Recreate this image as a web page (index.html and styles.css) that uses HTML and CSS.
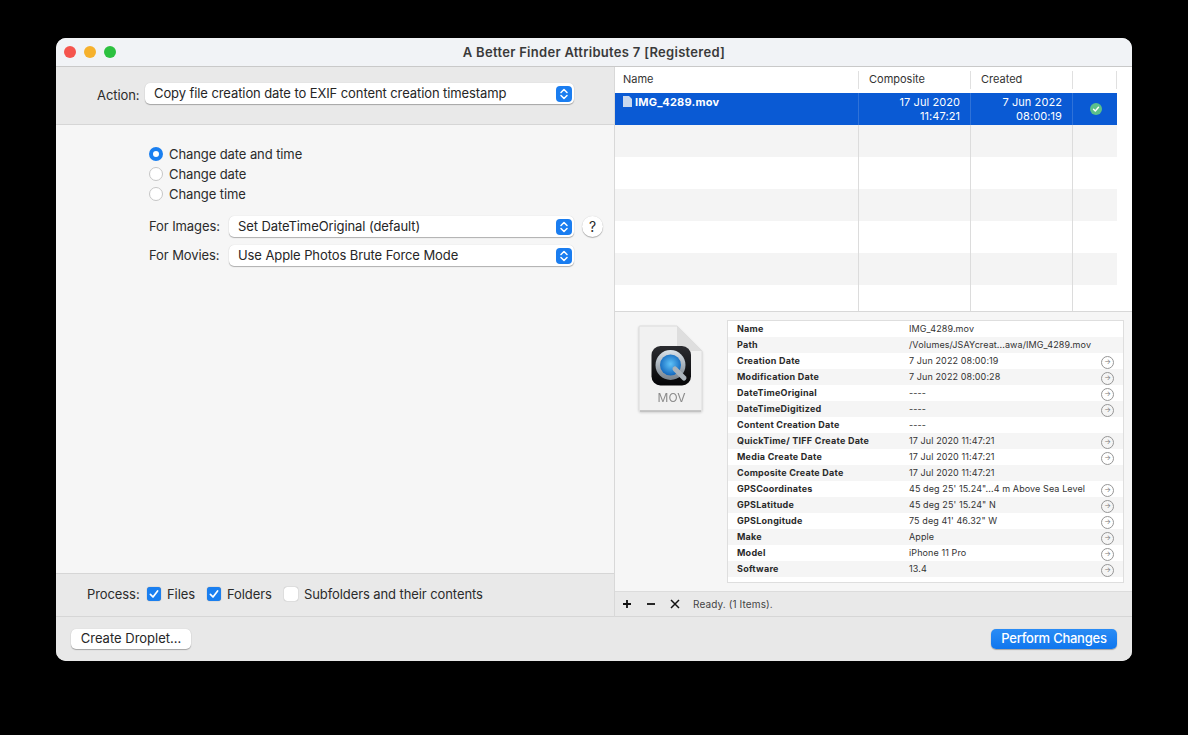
FILE: index.html
```html
<!DOCTYPE html>
<html lang="en">
<head>
<meta charset="utf-8">
<title>A Better Finder Attributes 7</title>
<link rel="stylesheet" href="styles.css">
</head>
<body>
<div class="window">
  <header class="titlebar">
    <div class="lights"><span class="light red"></span><span class="light yellow"></span><span class="light green"></span></div>
    <div class="title">A Better Finder Attributes 7 [Registered]</div>
  </header>
  <div class="content">
    <section class="left">
      <div class="action-bar">
        <span class="action-label">Action:</span>
        <div class="popup action-popup"><span class="popup-text">Copy file creation date to EXIF content creation timestamp</span><span class="stepper"><svg width="16" height="16" viewBox="0 0 16 16"><path d="M5 6.5 8 3.5l3 3M5 9.5l3 3 3-3" fill="none" stroke="#fff" stroke-width="1.5" stroke-linecap="round" stroke-linejoin="round"/></svg></span></div>
      </div>
      <div class="options">
        <div class="radios">
          <label class="radio-row"><span class="radio on"></span>Change date and time</label>
          <label class="radio-row"><span class="radio"></span>Change date</label>
          <label class="radio-row"><span class="radio"></span>Change time</label>
        </div>
        <div class="form-row">
          <span class="form-label">For Images:</span>
          <div class="popup form-popup"><span class="popup-text">Set DateTimeOriginal (default)</span><span class="stepper"><svg width="16" height="16" viewBox="0 0 16 16"><path d="M5 6.5 8 3.5l3 3M5 9.5l3 3 3-3" fill="none" stroke="#fff" stroke-width="1.5" stroke-linecap="round" stroke-linejoin="round"/></svg></span></div>
          <span class="help">?</span>
        </div>
        <div class="form-row">
          <span class="form-label">For Movies:</span>
          <div class="popup form-popup"><span class="popup-text">Use Apple Photos Brute Force Mode</span><span class="stepper"><svg width="16" height="16" viewBox="0 0 16 16"><path d="M5 6.5 8 3.5l3 3M5 9.5l3 3 3-3" fill="none" stroke="#fff" stroke-width="1.5" stroke-linecap="round" stroke-linejoin="round"/></svg></span></div>
        </div>
      </div>
      <div class="process-bar">
        <span class="process-label">Process:</span>
        <span class="check on"><svg width="14" height="14" viewBox="0 0 14 14"><path d="M3.4 7.4 6 10l4.6-6" fill="none" stroke="#fff" stroke-width="1.7" stroke-linecap="round" stroke-linejoin="round"/></svg></span><span class="check-text files">Files</span>
        <span class="check on"><svg width="14" height="14" viewBox="0 0 14 14"><path d="M3.4 7.4 6 10l4.6-6" fill="none" stroke="#fff" stroke-width="1.7" stroke-linecap="round" stroke-linejoin="round"/></svg></span><span class="check-text folders">Folders</span>
        <span class="check"></span><span class="check-text">Subfolders and their contents</span>
      </div>
    </section>
    <section class="right">
      <div class="file-table">
        <div class="t-row t-head"><div class="cell">Name</div><div class="cell">Composite</div><div class="cell">Created</div><div class="cell"></div></div>
        <div class="t-row selected">
          <div class="cell name"><svg class="mini-doc" width="9" height="11" viewBox="0 0 9 11"><path d="M0 0h6l3 3v8H0z" fill="#c9d8ee"/></svg>IMG_4289.mov</div>
          <div class="cell date">17 Jul 2020<br>11:47:21</div>
          <div class="cell date">7 Jun 2022<br>08:00:19</div>
          <div class="cell status"><svg width="12" height="12" viewBox="0 0 12 12"><circle cx="6" cy="6" r="6" fill="#5cc08a"/><path d="M3.5 6.2 5.300 8l3.200-3.800" fill="none" stroke="#fff" stroke-width="1.4" stroke-linecap="round" stroke-linejoin="round"/></svg></div>
        </div>
        <div class="t-row alt"><div class="cell"></div><div class="cell"></div><div class="cell"></div><div class="cell"></div></div>
        <div class="t-row"><div class="cell"></div><div class="cell"></div><div class="cell"></div><div class="cell"></div></div>
        <div class="t-row alt"><div class="cell"></div><div class="cell"></div><div class="cell"></div><div class="cell"></div></div>
        <div class="t-row"><div class="cell"></div><div class="cell"></div><div class="cell"></div><div class="cell"></div></div>
        <div class="t-row alt"><div class="cell"></div><div class="cell"></div><div class="cell"></div><div class="cell"></div></div>
        <div class="t-row short"><div class="cell"></div><div class="cell"></div><div class="cell"></div><div class="cell"></div></div>
      </div>
      <div class="detail">
        <svg class="file-icon" width="66" height="90" viewBox="0 0 66 90">
          <defs>
            <radialGradient id="lens" cx="50%" cy="45%" r="60%"><stop offset="0" stop-color="#5fc2f8"/><stop offset="1" stop-color="#0c5fb8"/></radialGradient>
            <linearGradient id="ring" x1="0" y1="0" x2="0" y2="1"><stop offset="0" stop-color="#dbe3ea"/><stop offset="1" stop-color="#76818c"/></linearGradient>
            <linearGradient id="tile" x1="0" y1="0" x2="0" y2="1"><stop offset="0" stop-color="#2b2c30"/><stop offset="1" stop-color="#050507"/></linearGradient>
          </defs>
          <path d="M2 1h37l25 25v59a1 1 0 0 1-1 1H2a1 1 0 0 1-1-1V2a1 1 0 0 1 1-1z" fill="#f1f1f1" stroke="#dcdcdc"/>
          <path d="M2 86h61" stroke="#bdbdbd" stroke-width="1.5"/>
          <path d="M39 1l25 25H43a4 4 0 0 1-4-4z" fill="#dedede"/>
          <rect x="13.500" y="21" width="39.500" height="39.500" rx="9" fill="url(#tile)"/>
          <circle cx="32.500" cy="40" r="15" fill="url(#ring)"/>
          <circle cx="32.500" cy="40" r="10.500" fill="url(#lens)"/>
          <path d="M37 44l9 9" stroke="#aab3bb" stroke-width="5" stroke-linecap="round"/>
          <text x="33.500" y="77" text-anchor="middle" class="mov-text">MOV</text>
        </svg>
        <div class="info">
          <div class="i-row"><b>Name</b><span>IMG_4289.mov</span></div>
          <div class="i-row"><b>Path</b><span>/Volumes/JSAYcreat...awa/IMG_4289.mov</span></div>
          <div class="i-row go"><b>Creation Date</b><span>7 Jun 2022 08:00:19</span></div>
          <div class="i-row go"><b>Modification Date</b><span>7 Jun 2022 08:00:28</span></div>
          <div class="i-row go"><b>DateTimeOriginal</b><span>----</span></div>
          <div class="i-row go"><b>DateTimeDigitized</b><span>----</span></div>
          <div class="i-row"><b>Content Creation Date</b><span>----</span></div>
          <div class="i-row go"><b>QuickTime/ TIFF Create Date</b><span>17 Jul 2020 11:47:21</span></div>
          <div class="i-row go"><b>Media Create Date</b><span>17 Jul 2020 11:47:21</span></div>
          <div class="i-row"><b>Composite Create Date</b><span>17 Jul 2020 11:47:21</span></div>
          <div class="i-row go"><b>GPSCoordinates</b><span>45 deg 25' 15.24"...4 m Above Sea Level</span></div>
          <div class="i-row go"><b>GPSLatitude</b><span>45 deg 25' 15.24" N</span></div>
          <div class="i-row go"><b>GPSLongitude</b><span>75 deg 41' 46.32" W</span></div>
          <div class="i-row go"><b>Make</b><span>Apple</span></div>
          <div class="i-row go"><b>Model</b><span>iPhone 11 Pro</span></div>
          <div class="i-row go"><b>Software</b><span>13.4</span></div>
        </div>
      </div>
      <div class="status-bar">
        <svg class="tool" width="10" height="10" viewBox="0 0 10 10"><path d="M5 1v8M1 5h8" stroke="#111" stroke-width="1.8"/></svg>
        <svg class="tool" width="10" height="10" viewBox="0 0 10 10"><path d="M1 5h8" stroke="#111" stroke-width="1.8"/></svg>
        <svg class="tool" width="10" height="10" viewBox="0 0 10 10"><path d="M1 1l8 8M9 1 1 9" stroke="#111" stroke-width="1.5"/></svg>
        <span class="status-text">Ready. (1 Items).</span>
      </div>
    </section>
  </div>
  <footer class="footer">
    <button class="btn">Create Droplet...</button>
    <button class="btn primary">Perform Changes</button>
  </footer>
</div>
</body>
</html>
```

FILE: styles.css
```css
* { box-sizing: border-box; }
html, body { height: 100%; }
body {
  margin: 0;
  background: #000;
  padding: 38px 56px 74px;
  font-family: Inter, "Liberation Sans", sans-serif;
  font-size: 13px;
  color: #2b2b2b;
  overflow: hidden;
}
.window {
  width: 1076px;
  height: 623px;
  border-radius: 10px;
  overflow: hidden;
  display: flex;
  flex-direction: column;
  background: #e8e8e8;
}
.titlebar {
  height: 29px;
  flex: none;
  display: flex;
  align-items: center;
  position: relative;
  background: #f1f3f6;
  border-bottom: 1px solid #c9c9c9;
}
.lights { display: flex; gap: 8px; padding-left: 8px; }
.light { width: 12px; height: 12px; border-radius: 50%; }
.red { background: #f5544d; }
.yellow { background: #f6b12c; }
.green { background: #2cc13f; }
.title {
  position: absolute;
  left: 0; right: 0;
  text-align: center;
  font-size: 13px;
  font-weight: 600;
  letter-spacing: .29px;
  color: #3a3a3a;
}
.content { flex: 1; display: flex; min-height: 0; }
.left {
  width: 559px;
  flex: none;
  display: flex;
  flex-direction: column;
  background: #f6f6f6;
  border-right: 1px solid #d8d8d8;
  letter-spacing: -.09px;
}
.action-bar {
  height: 58px;
  flex: none;
  display: flex;
  align-items: flex-start;
  padding: 16px 0 0 41px;
  background: #e9e9e9;
  border-bottom: 1px solid #d6d6d6;
}
.action-label { width: 48px; margin-top: 4px; line-height: 16px; }
.popup {
  height: 21px;
  display: flex;
  align-items: center;
  justify-content: space-between;
  padding: 0 2px 0 9px;
  background: #fff;
  border-radius: 5px;
  box-shadow: 0 1px 1px rgba(0,0,0,.28), 0 0 1px rgba(0,0,0,.18);
  color: #262626;
}
.popup-text { margin-top: -2px; }
.action-popup { width: 429px; }
.form-popup { width: 345px; }
.stepper {
  width: 16px;
  height: 16px;
  border-radius: 4px;
  background: #1a7df0;
  display: flex;
}
.options { flex: 1; padding: 19px 0 0 93px; }
.radios { margin-bottom: 12px; }
.radio-row { height: 20px; display: flex; align-items: center; gap: 6px; }
.radio {
  width: 14px;
  height: 14px;
  border-radius: 50%;
  background: #fff;
  border: 1px solid #c6c6c6;
}
.radio.on { background: #fff; border: 4px solid #1a7ff0; }
.form-row { display: flex; align-items: center; margin-bottom: 8px; height: 21px; }
.form-label { width: 80px; flex: none; margin-top: -2px; }
.help {
  width: 21px;
  height: 21px;
  margin-left: 8px;
  border-radius: 50%;
  background: #fff;
  box-shadow: 0 1px 1px rgba(0,0,0,.28), 0 0 1px rgba(0,0,0,.18);
  display: flex;
  align-items: center;
  justify-content: center;
  font-size: 14px;
}
.process-bar {
  height: 44px;
  flex: none;
  display: flex;
  align-items: center;
  padding: 0 0 2px 31px;
  background: #e9e9e9;
  border-top: 1px solid #d6d6d6;
  border-bottom: 1px solid #d6d6d6;
}
.process-label { width: 60px; }
.check {
  width: 14px;
  height: 14px;
  flex: none;
  border-radius: 3px;
  background: #fff;
  box-shadow: 0 0 1px rgba(0,0,0,.45);
  display: flex;
}
.check.on { background: #1a7ff0; }
.check-text { margin-left: 6px; }
.check-text.files { width: 40px; }
.check-text.folders { width: 57px; }
.right {
  flex: 1;
  min-width: 0;
  display: flex;
  flex-direction: column;
  background: #f6f6f6;
}
.file-table {
  height: 245px;
  flex: none;
  background: #fff;
  border-bottom: 1px solid #d8d8d8;
  overflow: hidden;
}
.t-row {
  display: grid;
  grid-template-columns: 244px 112px 102px 44px;
  height: 32px;
}
.t-row.short { height: 27px; }
.t-head {
  height: 26px;
  font-size: 11px;
  align-items: center;
  color: #333;
}
.cell { height: 100%; border-right: 1px solid #dcdcdc; }
.cell:last-child { border-right: 0; }
.t-head .cell {
  height: 18px;
  line-height: 16px;
  padding-left: 10px;
  border-right: 1px solid #e0e0e0;
}
.t-head .cell:first-child { padding-left: 8px; }
.alt { background: #f4f4f4; width: 502px; }
.selected {
  background: #0a5ad4;
  color: #fff;
  width: 502px;
  font-size: 11px;
  line-height: 14px;
}
.selected .cell { border-right-color: #2f72d8; padding-top: 2px; }
.name { font-weight: 700; letter-spacing: .25px; padding-left: 8px; display: flex; align-items: flex-start; gap: 3px; }
.mini-doc { margin-top: 1px; flex: none; }
.date { text-align: right; padding-right: 10px; letter-spacing: .08px; }
.selected .status {
  display: flex;
  align-items: center;
  justify-content: center;
  padding: 0 0 0 2px;
}
.detail {
  flex: 1;
  min-height: 0;
  display: flex;
  align-items: flex-start;
  padding: 8px 8px 8px 23px;
}
.file-icon { margin: 5px 0 0 0; flex: none; filter: drop-shadow(0 1px 1px rgba(0,0,0,.15)); }
.mov-text { font-family: Inter, "Liberation Sans", sans-serif; font-size: 12px; fill: #8a8a8a; }
.info {
  width: 397px;
  height: 263px;
  margin-left: 23px;
  background: #fff;
  border: 1px solid #dedede;
  font-size: 9px;
}
.i-row {
  height: 16px;
  display: flex;
  align-items: center;
  padding: 0 0 2px 9px;
  position: relative;
  color: #333;
  letter-spacing: .1px;
}
.i-row:nth-child(even) { background: #f5f5f5; }
.i-row b { width: 172px; flex: none; font-weight: 700; color: #2a2a2a; letter-spacing: .24px; }
.i-row.go::after {
  content: "→";
  position: absolute;
  left: 373px;
  top: 3px;
  width: 11px;
  height: 11px;
  border: 1px solid #969696;
  border-radius: 50%;
  font-size: 7px;
  line-height: 9px;
  letter-spacing: 0;
  text-align: center;
  color: #777;
}
.status-bar {
  height: 26px;
  flex: none;
  display: flex;
  align-items: center;
  padding-left: 7px;
  gap: 14px;
  background: #e9e9e9;
  border-top: 1px solid #dcdcdc;
  border-bottom: 1px solid #d6d6d6;
}
.tool { flex: none; }
.status-text { font-size: 10px; margin-left: -1px; color: #444; letter-spacing: .12px; }
.footer {
  height: 44px;
  flex: none;
  display: flex;
  justify-content: space-between;
  align-items: flex-start;
  padding: 12px 15px 0 15px;
  background: #e8e8e8;
}
.btn {
  height: 20px;
  width: 120px;
  padding: 0 0 2px;
  border: 0;
  border-radius: 5px;
  background: #fff;
  box-shadow: 0 1px 1px rgba(0,0,0,.28), 0 0 1px rgba(0,0,0,.18);
  font: inherit;
  color: #262626;
}
.btn.primary {
  width: 126px;
  background: linear-gradient(#2a8cf5, #0f76ee);
  color: #fff;
  font-weight: 500;
  letter-spacing: -.25px;
}
```
